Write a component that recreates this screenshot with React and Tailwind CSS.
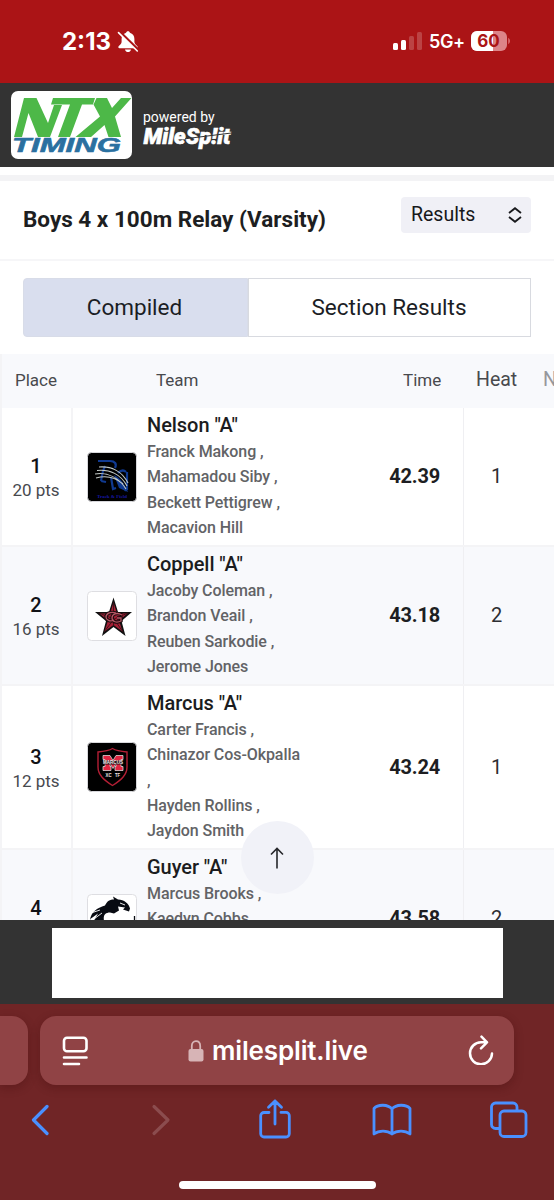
import React from "react";

function BellOff() {
  return (
    <svg className="ml-[4px] h-[22px] w-[22px]" viewBox="0 0 22 22">
      <path d="M11 0.200c-1 0-1.800.7-1.900 1.600C6.200 2.700 4.600 5 4.600 8v2.800c0 1.800-1.200 2.700-2.800 4.200-.900.900-.5 2.300.800 2.300h16.800c1.300 0 1.700-1.400.8-2.300-1.600-1.500-2.800-2.400-2.800-4.200V8c0-3-1.600-5.300-4.500-6.200C12.800.9 12 .2 11 .2Z" fill="#fff" />
      <path d="M8 18.400h6c-.2 1.500-1.400 2.600-3 2.600s-2.800-1.100-3-2.600Z" fill="#fff" />
      <path d="M3.200 1.200 21.500 19" stroke="#ab1416" strokeWidth="2.600" />
      <path d="M1.500 1.600 20.300 20" stroke="#fff" strokeWidth="1.600" strokeLinecap="round" />
    </svg>
  );
}

function StatusBar() {
  return (
    <div className="flex h-[83px] shrink-0 items-center bg-[#ab1416] pr-[44px] pl-[62px] text-white">
      <span className="w-[51px] text-[24px] leading-none font-bold whitespace-nowrap font-['Inter',sans-serif]">2:13</span>
      <BellOff />
      <div className="ml-auto flex items-center">
        <div className="flex h-[18px] -translate-y-px items-end gap-[3px]">
          <i className="h-[7px] w-[5px] rounded-[1.5px] bg-white" />
          <i className="h-[10px] w-[5px] rounded-[1.5px] bg-white" />
          <i className="h-[14px] w-[5px] rounded-[1.5px] bg-white/20" />
          <i className="h-[18px] w-[5px] rounded-[1.5px] bg-white/20" />
        </div>
        <span className="ml-[7px] w-[36px] text-[18px] leading-none font-semibold tracking-[-0.4px] whitespace-nowrap font-['Inter',sans-serif]">5G+</span>
        <svg className="ml-[6px] h-[20px] w-[39px] -translate-y-px" viewBox="0 0 39 20">
          <defs>
            <clipPath id="charge"><rect width="22" height="20" /></clipPath>
          </defs>
          <rect width="36" height="20" rx="6" fill="#dc8589" />
          <rect width="36" height="20" rx="6" fill="#fff" clipPath="url(#charge)" />
          <path d="M37.200 6.800c1.200.8 1.800 1.900 1.800 3.200s-.6 2.400-1.800 3.200Z" fill="#d9696d" />
          <text x="17.500" y="16.300" textAnchor="middle" fontFamily="Inter, sans-serif" fontWeight="700" fontSize="17" fill="#ab1416">60</text>
        </svg>
      </div>
    </div>
  );
}

function Brand() {
  return (
    <div className="flex h-[84px] shrink-0 items-start bg-[#333333] pt-[8px] pl-[11px]">
      <svg className="h-[68px] w-[121px]" viewBox="0 0 121 68">
        <rect width="121" height="68" rx="7" fill="#fff" />
        <g fill="#4db848">
          <path d="M13 7h12.500L37 32l6-18h8L39 46H27L17.500 22 11 46H3Z" />
          <path d="M42 7h42l-2 6.500H71L59 46H47l12-32.500H40Z" />
          <path d="M85.500 7H96l5 10 9-10h10.500L104 25.500 110 46H97.500L93.500 34 80 46H64.500L89 25.500 82.500 13.500Z" />
        </g>
        <text x="1" y="61.300" textLength="109" lengthAdjust="spacingAndGlyphs" fontFamily="Liberation Sans, sans-serif" fontWeight="700" fontStyle="italic" fontSize="20.500" fill="#2a70a0" stroke="#2a70a0" strokeWidth=".6">TIMING</text>
      </svg>
      <div className="flex flex-col pt-[18px] pl-[11px] text-white">
        <span className="text-[14px] leading-[16px] whitespace-nowrap font-['Roboto',sans-serif]">powered by</span>
        <svg className="h-[26px] w-[92px] overflow-visible" viewBox="0 0 92 26">
          <text x="0.500" y="18.500" textLength="87" lengthAdjust="spacingAndGlyphs" fontFamily="Roboto, sans-serif" fontWeight="900" fontStyle="italic" fontSize="22" fill="#fff" stroke="#fff" strokeWidth=".6">MileSp!it</text>
          <path d="M42 13.800 90 7.800" stroke="#333" strokeWidth="1" />
        </svg>
      </div>
    </div>
  );
}

function NelsonLogo() {
  return (
    <svg className="h-[50px] w-[50px]" viewBox="0 0 50 50">
      <rect x=".5" y=".5" width="49" height="49" rx="4" fill="#000" stroke="#d8d8dc" />
      <g fill="none" stroke="#103a91" strokeWidth="2.200">
        <path d="M11 9h12c5 0 7 3 5 7M18 14c-3 6-3 10-4 15M14 29l5 1M24 25l2 12 3-1M31 21c4-4 7-2 8-1M40 20v18M33 29l6 10" />
      </g>
      <path d="M27 23c6 3 11 9 14 17l-9-4Z" fill="#103a91" />
      <g fill="none" stroke="#c2c9c6" strokeWidth="1.100">
        <path d="M12 15c12-1 23 4 29 16M10 18.500c13-1.500 24 4 30 15.500M8 22c13-2 24 4 31 15M9 26c11-3 20 0 27 6" />
      </g>
      <text x="10" y="46" textLength="30" fontFamily="Liberation Serif, serif" fontWeight="700" fontSize="5" fill="#1717a5">Track &amp; Field</text>
    </svg>
  );
}

function CoppellLogo() {
  return (
    <svg className="h-[50px] w-[50px]" viewBox="0 0 50 50">
      <rect x=".5" y=".5" width="49" height="49" rx="4" fill="#fff" stroke="#dedee2" />
      <path d="M26.500 6.500 31 21h14L34.500 30 38.500 45l-12-9L15 45l4-15L8 21h14Z" fill="#111" />
      <path d="M26.500 11.500 30 22.500h10.500l-8.500 7 3.500 11-9-6.500-9 6.500 3.500-11-8.500-7H23Z" fill="#a51f35" />
      <path d="M26.500 11v23M12 22l15 6 14-6M17 41l10-13 9 13" stroke="#3b1017" strokeWidth=".9" fill="none" />
      <g fill="none">
        <path d="M29 22c-6-2-10 1-10 4s4 5 8 3M35 24c-5-3-10-1-10 3s5 5 9 3v-3h-4" stroke="#1d0b0e" strokeWidth="3.400" />
        <path d="M29 22c-6-2-10 1-10 4s4 5 8 3M35 24c-5-3-10-1-10 3s5 5 9 3v-3h-4" stroke="#b45664" strokeWidth="1.300" />
      </g>
    </svg>
  );
}

function MarcusLogo() {
  return (
    <svg className="h-[50px] w-[50px]" viewBox="0 0 50 50">
      <rect x=".5" y=".5" width="49" height="49" rx="4" fill="#000" stroke="#d8d8dc" />
      <path d="M25.500 6.500c4 2.500 9 3 14.500 3.500v15c0 8-6 13-14.500 18.500C17 38 11 33 11 25V10c5.500-.5 10.500-1 14.500-3.500Z" fill="none" stroke="#b41f35" strokeWidth="1.400" />
      <path d="M16 13.500h7l3 5 3-5h7v4h-2v7h2v4h-8v-4h1v-3l-3 5-3-5v3h1v4h-8v-4h2v-7h-2Z" fill="#df2440" stroke="#eee" strokeWidth=".7" />
      <rect x="16" y="18.500" width="20" height="4" fill="#251015" />
      <g fontFamily="Liberation Sans, sans-serif" fontWeight="700" fill="#f1e9ea">
        <text x="16" y="22.200" fontSize="5" textLength="20" lengthAdjust="spacingAndGlyphs">MARCUS</text>
        <text x="18.500" y="35" fontSize="5" textLength="6" lengthAdjust="spacingAndGlyphs">XC</text>
        <text x="28" y="35" fontSize="5" textLength="5" lengthAdjust="spacingAndGlyphs">TF</text>
      </g>
    </svg>
  );
}

function GuyerLogo() {
  return (
    <svg className="h-[50px] w-[50px]" viewBox="0 0 50 50">
      <rect x=".5" y=".5" width="49" height="49" rx="4" fill="#fff" stroke="#dedee2" />
      <path d="M3 26C4 18 10 14 18 11.500c2-4.500 5-6 9-6L26 2.500l5 3c6 0 11 4 12 9l-1 3-6-2 2-2-7-1 1 4-5 3-4-1c-5 0-7 3-6 8H7l4-7-7 5Z" fill="#080b12" />
      <path d="m4 19 9-3M7 25l8-6M33 9l5 2" stroke="#fff" strokeWidth=".9" />
      <path d="M47.500 22v18" stroke="#080b12" strokeWidth="1.300" />
    </svg>
  );
}

const rows = [
  { place: "1", pts: "20 pts", team: 'Nelson "A"', Logo: NelsonLogo, athletes: ["Franck Makong ,", "Mahamadou Siby ,", "Beckett Pettigrew ,", "Macavion Hill"], time: "42.39", heat: "1", size: "h-[139px] bg-white" },
  { place: "2", pts: "16 pts", team: 'Coppell "A"', Logo: CoppellLogo, athletes: ["Jacoby Coleman ,", "Brandon Veail ,", "Reuben Sarkodie ,", "Jerome Jones"], time: "43.18", heat: "2", size: "h-[139px] bg-[#f8f9fc]" },
  { place: "3", pts: "12 pts", team: 'Marcus "A"', Logo: MarcusLogo, athletes: ["Carter Francis ,", "Chinazor Cos-Okpalla ,", "Hayden Rollins ,", "Jaydon Smith"], time: "43.24", heat: "1", size: "h-[164px] bg-white" },
  { place: "4", pts: "", team: 'Guyer "A"', Logo: GuyerLogo, athletes: ["Marcus Brooks ,", "Kaedyn Cobbs", "", ""], time: "43.58", heat: "2", size: "h-[139px] bg-[#f8f9fc]" },
];

function Row({ row }) {
  const { Logo } = row;
  return (
    <div className={"grid shrink-0 grid-cols-[73px_390px_91px] border-b-2 border-[#f4f4f6] " + row.size}>
      <div className="flex flex-col items-center justify-center border-r-2 border-l-2 border-[#f4f4f6] pt-[3px] pr-px">
        <span className="text-[20px] leading-[24px] font-medium text-[#111216]">{row.place}</span>
        <span className="h-[24px] text-[17px] leading-[24px] text-[#47494e]">{row.pts}</span>
      </div>
      <div className="flex items-center pr-[23px] pl-[14px]">
        <div className="shrink-0"><Logo /></div>
        <div className="ml-[10px] w-[160px] self-start pt-[4px]">
          <div className="text-[20px] leading-[27px] font-medium tracking-[-0.05px] whitespace-nowrap text-[#1b1c20]">{row.team}</div>
          {row.athletes.map((name, i) => (
            <div key={i} className="min-h-[25.3px] text-[16px] leading-[25.3px] font-medium tracking-[-0.08px] text-[#626366]">{name}</div>
          ))}
        </div>
        <span className="ml-auto pb-[1px] text-[20px] leading-[24px] font-bold tracking-[-0.2px] text-[#1d1e22]">{row.time}</span>
      </div>
      <div className="flex items-center border-l border-[#efeff2] pb-[1px] pl-[27px] text-[20px] leading-[24px] text-[#2d2e32]">{row.heat}</div>
    </div>
  );
}

function Results() {
  return (
    <main className="flex h-[753px] shrink-0 flex-col overflow-hidden bg-white font-['Roboto',sans-serif]">
      <div className="mt-[8px] h-[6px] shrink-0 bg-[#f3f3f5]" />
      <div className="flex h-[80px] shrink-0 items-start justify-between border-b-2 border-[#f6f6f8] pt-[16px] pr-[23px] pl-[23px]">
        <h1 className="pt-[8px] text-[22.5px] leading-[28px] font-bold whitespace-nowrap text-[#1d1e21]">Boys 4 x 100m Relay (Varsity)</h1>
        <button className="flex h-[36px] w-[130px] items-center justify-between rounded-[4px] bg-[#f0f0f6] pr-[9px] pl-[10px] text-[19.5px] text-[#17181b]">
          <span>Results</span>
          <svg className="h-[16px] w-[14px]" viewBox="0 0 14 16" fill="none" stroke="#17181b" strokeWidth="1.800">
            <path d="m1 6 6-4.800L13 6M1 10l6 4.800 6-4.800" />
          </svg>
        </button>
      </div>
      <div className="mx-[23px] mt-[17px] flex h-[59px] shrink-0 rounded-[3px] text-[#1b1d25]">
        <button className="flex w-[225px] items-center justify-center rounded-l-[4px] border border-[#d8dce8] bg-[#d9deee] pr-[2px] text-[22.5px]">Compiled</button>
        <button className="flex flex-1 items-center justify-center border border-[#d8dae0] bg-white pr-[1px] text-[22.5px]">Section Results</button>
      </div>
      <div className="mt-[17px] grid h-[54px] shrink-0 grid-cols-[156px_247px_73px_67px_11px] items-center overflow-hidden border-l-2 border-[#f4f4f6] bg-[#f8f9fc] text-[17px] text-[#48494d]">
        <span className="pl-[13px]">Place</span>
        <span className="-ml-[2px]">Team</span>
        <span className="-ml-[2px]">Time</span>
        <span className="-ml-[2px] pb-[2px] text-[19.500px]">Heat</span>
        <span className="-ml-[2px] pb-[2px] text-[19.500px] text-[#96979c]">N</span>
      </div>
      {rows.map((row) => <Row key={row.place} row={row} />)}
    </main>
  );
}

function Browser() {
  return (
    <footer className="flex h-[196px] shrink-0 flex-col overflow-hidden bg-[#702526] pt-[12px]">
      <div className="flex h-[69px] gap-[12px]">
        <div className="w-[28px] rounded-r-[16px] bg-[#904345] shadow-[0_3px_10px_rgba(60,10,10,0.3)]" />
        <div className="flex w-[474px] items-center rounded-[16px] bg-[#904345] pr-[20px] pl-[22px] text-white shadow-[0_3px_10px_rgba(60,10,10,0.3)]">
          <svg className="h-[30px] w-[27px]" viewBox="0 0 27 30" fill="none" stroke="#fff" strokeWidth="2.600" strokeLinecap="round">
            <rect x="2" y="1.800" width="22.500" height="13.500" rx="3" />
            <path d="M2 21.500h22.500M2 28h15" />
          </svg>
          <svg className="ml-[99px] h-[22px] w-[16px]" viewBox="0 0 16 22">
            <path d="M3.800 10V6c0-3 1.600-4.800 4.200-4.800s4.200 1.800 4.200 4.800v4" fill="none" stroke="#d7b4b6" strokeWidth="1.800" />
            <rect x=".5" y="9" width="15" height="12.500" rx="2" fill="#d7b4b6" />
          </svg>
          <span className="ml-[8px] text-[26px] leading-none font-semibold tracking-[-0.15px] whitespace-nowrap font-['Inter',sans-serif]">milesplit.live</span>
          <svg className="ml-auto h-[30px] w-[26px] -translate-y-px" viewBox="0 0 26 30" fill="none" stroke="#fff" strokeWidth="2.500" strokeLinecap="round" strokeLinejoin="round">
            <path d="M19 7.300h-6A11 11 0 1 0 24 18.500M13.500 1.700l5.500 5.600-6 6" />
          </svg>
        </div>
      </div>
      <div className="mt-[13px] flex h-[44px] items-center pl-[29px] text-[#4a90ff]">
        <svg className="h-[32px] w-[20px]" viewBox="0 0 20 32" fill="none" stroke="currentColor" strokeWidth="3.200" strokeLinecap="round" strokeLinejoin="round"><path d="M18 2.500 4.500 16 18 29.500" /></svg>
        <svg className="ml-[102px] h-[32px] w-[20px]" viewBox="0 0 20 32" fill="none" stroke="#8b4c4e" strokeWidth="3.200" strokeLinecap="round" strokeLinejoin="round"><path d="m3 2.500 14 13.500L3 29.500" /></svg>
        <svg className="ml-[87px] h-[42px] w-[34px]" viewBox="0 0 34 42" fill="none" stroke="currentColor" strokeWidth="2.800" strokeLinecap="round" strokeLinejoin="round">
          <path d="M11 13.500H6a3.300 3.300 0 0 0-3.300 3.300v18A3.300 3.300 0 0 0 6 38h22a3.300 3.300 0 0 0 3.300-3.300v-18a3.300 3.300 0 0 0-3.300-3.300h-5M17 25V2M10.500 8.300 17 2l6.500 6.300" />
        </svg>
        <svg className="ml-[80px] h-[34px] w-[40px]" viewBox="0 0 40 34" fill="none" stroke="currentColor" strokeWidth="2.800" strokeLinecap="round" strokeLinejoin="round">
          <path d="M20 6C16 1.200 6 1 2 5.500V31c5-3.800 13-3.800 18 0 5-3.800 13-3.800 18 0V5.500C34 1 24 1.200 20 6ZM20 6v25" />
        </svg>
        <svg className="ml-[77px] h-[38px] w-[39px]" viewBox="0 0 39 38" fill="none" stroke="currentColor" strokeWidth="2.800" strokeLinecap="round" strokeLinejoin="round">
          <path d="M10 27.500H6.500A4 4 0 0 1 2.500 23.500V6a4 4 0 0 1 4-4H24a4 4 0 0 1 4 4v3.500" />
          <rect x="11" y="10" width="26" height="25.500" rx="4" />
        </svg>
      </div>
      <div className="mt-[39px] ml-[179px] h-[8px] w-[197px] shrink-0 rounded-full bg-white" />
    </footer>
  );
}

export default function App() {
  return (
    <div className="relative flex h-[1200px] w-[554px] flex-col overflow-hidden bg-white">
      <StatusBar />
      <Brand />
      <Results />
      <div className="h-[84px] shrink-0 bg-[#333333] pt-[8px] pl-[52px]">
        <div className="h-[70px] w-[451px] bg-white" />
      </div>
      <Browser />
      <button className="absolute top-[821px] left-[241px] flex h-[73px] w-[73px] items-center justify-center rounded-full bg-[#f1f2f8]" aria-label="Back to top">
        <svg className="h-[22px] w-[14px] -translate-x-px" viewBox="0 0 14 22" fill="none" stroke="#26272b" strokeWidth="1.600"><path d="M7 21.500V1.500M1 7.500l6-6 6 6" /></svg>
      </button>
    </div>
  );
}
